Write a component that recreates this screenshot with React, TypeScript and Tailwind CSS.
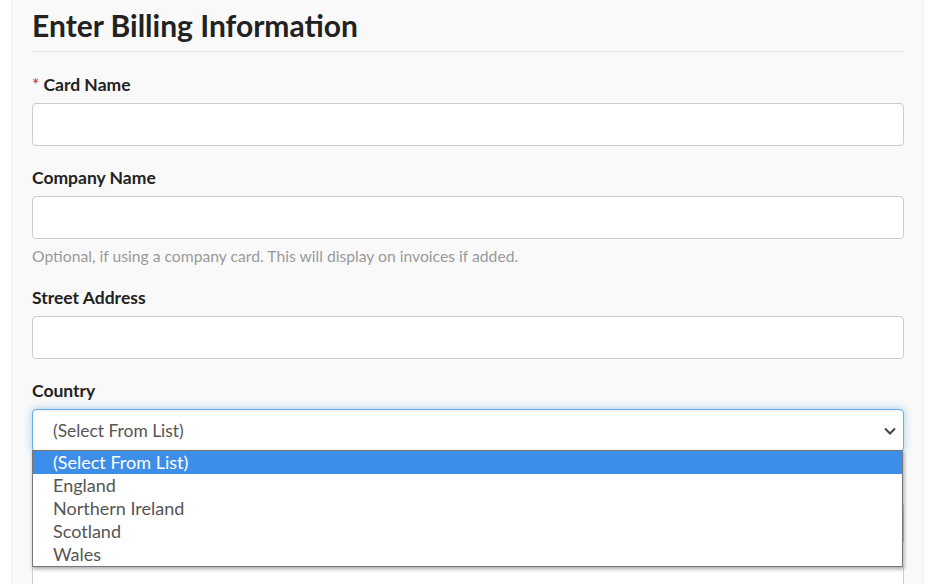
import React from "react";

function Field({ label, required, help }: { label: string; required?: boolean; help?: string }) {
  return (
    <div className="mb-[20px]">
      <div className="mb-[7px] h-[23px] pt-[1px] text-[17.5px] leading-[22px] font-bold text-[#222]">
        {required && <span className="mr-[4px] text-[#c9302c] font-normal">*</span>}
        {label}
      </div>
      <div className="h-[43px] rounded-[4px] border border-[#ccc] bg-white" />
      {help && (
        <div className="mt-[7px] text-[15.7px] leading-[20px] text-[#999]">{help}</div>
      )}
    </div>
  );
}

export default function App() {
  const options = ["(Select From List)", "England", "Northern Ireland", "Scotland", "Wales"];
  return (
    <div className="min-h-[584px] h-[584px] overflow-hidden bg-white" style={{ fontFamily: "Lato, 'Noto Sans', sans-serif" }}>
      <div className="ml-[11px] w-[913px] h-full border-x border-[#eee] bg-[#f9f9f9] pl-[20px] pr-[19px] pt-[7px]">
        <h1 className="border-b border-[#e5e5e5] pb-[8px] text-[30px] leading-[36px] font-bold text-[#222]">
          Enter Billing Information
        </h1>
        <div className="pt-[21px]">
          <Field label="Card Name" required />
          <Field label="Company Name" help="Optional, if using a company card. This will display on invoices if added." />
          <Field label="Street Address" />
          <div className="mb-[20px]">
            <div className="mb-[7px] h-[23px] pt-[1px] text-[17.5px] leading-[22px] font-bold text-[#222]">Country</div>
            <div className="relative z-10">
              <div className="flex h-[43px] items-center justify-between rounded-[4px] border border-[#66afe9] bg-white pl-[20px] pr-[6px] pt-[1px] text-[17.4px] text-[#555] shadow-[inset_0_1px_1px_rgba(0,0,0,0.075),0_0_8px_rgba(102,175,233,0.6)]">
                <span>(Select From List)</span>
                <svg width="14" height="10" viewBox="0 0 14 10">
                  <path d="M2 2.5 L7 7.5 L12 2.5" fill="none" stroke="#444" strokeWidth="2" />
                </svg>
              </div>
              <div className="absolute left-0 right-[1px] top-[41px] border border-[#777] bg-white shadow-[1px_2px_4px_rgba(0,0,0,0.35)]">
                {options.map((o, i) => (
                  <div
                    key={o}
                    className={
                      i === 0
                        ? "h-[23px] pl-[20px] text-[18px] leading-[23px] bg-[#3d8ee8] text-white"
                        : "h-[23px] pl-[20px] text-[18px] leading-[23px] text-[#555]"
                    }
                  >
                    {o}
                  </div>
                ))}
              </div>
            </div>
          </div>
          <div className="mb-[20px]">
            <div className="mb-[7px] h-[23px]" />
            <div className="h-[43px] rounded-[4px] border border-[#ccc] bg-white" />
          </div>
          <div className="h-[43px] rounded-[4px] border border-[#ccc] bg-white" />
        </div>
      </div>
    </div>
  );
}
